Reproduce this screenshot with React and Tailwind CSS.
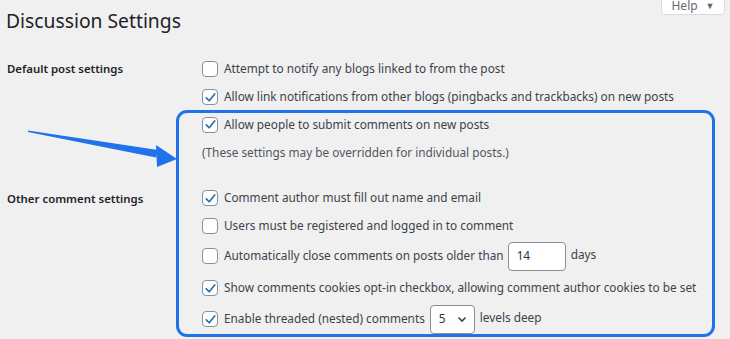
import React from "react";

const Check = ({ checked }) => (
  <span className="w-4 h-4 shrink-0 rounded-[4px] border border-[#8c8f94] bg-white flex items-center justify-center">
    {checked && (
      <svg width="13" height="13" viewBox="0 0 20 20">
        <path d="M3.5 10.5 L8 15 L16.5 4.5" fill="none" stroke="#2271b1" strokeWidth="2.6" strokeLinecap="round" strokeLinejoin="round" />
      </svg>
    )}
  </span>
);

const Row = ({ checked, h = "h-[28px]", children }) => (
  <div className={`flex items-center gap-[6px] ${h}`}>
    <Check checked={checked} />
    <div className="flex items-center whitespace-nowrap">{children}</div>
  </div>
);

const App = () => {
  return (
    <div className="relative w-[730px] h-[339px] overflow-hidden bg-[#f0f0f1] text-[11.8px] text-[#3c434a]" style={{ fontFamily: '"Noto Sans", "Open Sans", sans-serif' }}>
      <div className="absolute right-[5px] top-[-4px] h-[19px] w-[64px] bg-white border border-[#dcdcde] rounded-b-[4px] flex items-center justify-center gap-[8px] text-[#646970] text-[12px]">
        <span>Help</span>
        <span className="text-[9px]">▼</span>
      </div>

      <h1 className="pl-[6px] pt-[6px] h-[55px] text-[19.3px] text-[#1d2327] leading-[30px]">Discussion Settings</h1>

      <div className="flex">
        <div className="w-[176px] shrink-0 pl-[7px] text-[#1d2327] font-semibold text-[11.4px]">
          <div className="h-[28px] flex items-center">Default post settings</div>
          <div className="h-[102px]" />
          <div className="h-[28px] flex items-center">Other comment settings</div>
        </div>

        <div className="flex flex-col">
          <div className="pl-[26px]">
            <Row checked={false}>Attempt to notify any blogs linked to from the post</Row>
            <Row checked={true}>Allow link notifications from other blogs (pingbacks and trackbacks) on new posts</Row>
          </div>

          <div className="mt-[-1px] w-[539px] border-[3px] border-[#1f72ea] rounded-[11px] pl-[23px]">
            <Row checked={true} h="h-[23px]">Allow people to submit comments on new posts</Row>
            <div className="h-[33px] flex items-center text-[#50575e]">(These settings may be overridden for individual posts.)</div>
            <div className="h-[15px]" />
            <Row checked={true}>Comment author must fill out name and email</Row>
            <Row checked={false}>Users must be registered and logged in to comment</Row>
            <Row checked={false} h="h-[32px]">
              <span>Automatically close comments on posts older than</span>
              <span className="ml-[4px] w-[58px] h-[29px] bg-white border border-[#8c8f94] rounded-[4px] flex items-center pl-[8px] text-[#2c3338]">14</span>
              <span className="ml-[5px] mt-[-2px]">days</span>
            </Row>
            <Row checked={true} h="h-[32px]">Show comments cookies opt-in checkbox, allowing comment author cookies to be set</Row>
            <Row checked={true} h="h-[30px]">
              <span>Enable threaded (nested) comments</span>
              <span className="ml-[5px] w-[45px] h-[29px] bg-white border border-[#8c8f94] rounded-[4px] flex items-center justify-between pl-[8px] pr-[6px] text-[#2c3338]">
                5
                <svg width="12" height="12" viewBox="0 0 12 12">
                  <path d="M2.5 4.5 L6 8 L9.5 4.5" fill="none" stroke="#3c434a" strokeWidth="1.6" />
                </svg>
              </span>
              <span className="ml-[5px] mt-[-3px]">levels deep</span>
            </Row>
          </div>
        </div>
      </div>

      <svg className="absolute left-0 top-0 pointer-events-none" width="730" height="339" viewBox="0 0 730 339">
        <polygon points="28,130.5 158,150 156,157.5 28,132" fill="#1f72ea" />
        <polygon points="156,145 177,159 157,167" fill="#1f72ea" />
      </svg>
    </div>
  );
};

export default App;
